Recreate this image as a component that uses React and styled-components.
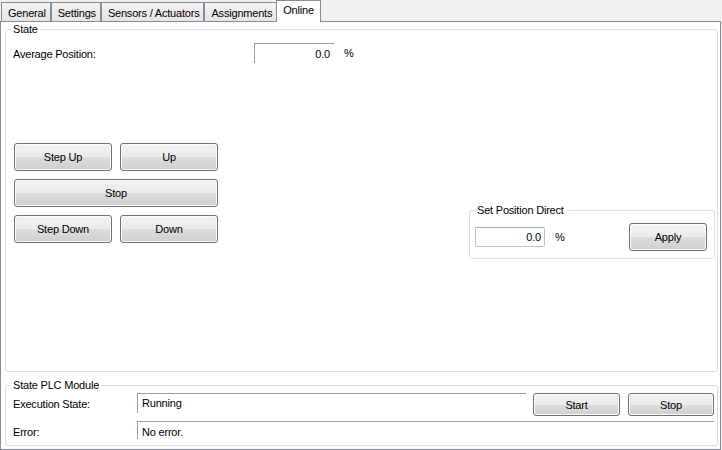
import React from "react";
import styled, { createGlobalStyle } from "styled-components";

const Global = createGlobalStyle`
  html, body { margin: 0; padding: 0; background: #f0f0f0; }
  body {
    font-family: "Liberation Sans", Arial, sans-serif;
    font-size: 11px;
    letter-spacing: -0.2px;
    color: #000;
  }
  * { box-sizing: border-box; }
`;

const Window = styled.div`
  width: 722px;
  height: 450px;
  display: flex;
  flex-direction: column;
  background: #f0f0f0;
`;

const TabStrip = styled.div`
  height: 21px;
  display: flex;
  align-items: flex-end;
  padding-left: 1px;
  flex: none;
`;

const Tab = styled.div`
  height: ${(p) => (p.$active ? "22px" : "19px")};
  margin-bottom: ${(p) => (p.$active ? "-1px" : "0")};
  margin-left: ${(p) => (p.$active ? "-1px" : "0")};
  padding: ${(p) => (p.$active ? "0 6px 3px 6px" : "1px 4px 0 6px")};
  display: flex;
  align-items: center;
  border: 1px solid #898c95;
  border-bottom: none;
  background: ${(p) =>
    p.$active ? "#ffffff" : "linear-gradient(#f3f3f3, #e5e5e5)"};
  position: relative;
  z-index: ${(p) => (p.$active ? 1 : 0)};
  white-space: nowrap;
`;

const Page = styled.div`
  width: 721px;
  flex: 1;
  background: #ffffff;
  border: 1px solid #898c95;
  display: flex;
  flex-direction: column;
  gap: 7px;
  padding: 1px 2px 3px 4px;
`;

const Group = styled.fieldset`
  margin: 0;
  min-width: 0;
  border: 1px solid #d5dfe5;
  border-radius: 3px;
  padding: 0;
  height: ${(p) => p.$h};
  flex: none;
`;

const Legend = styled.legend`
  padding: 0 2px;
  margin-left: 5px;
  line-height: 13px;
`;

const GroupBody = styled.div`
  display: flex;
  flex-direction: column;
  padding: ${(p) => p.$pad};
`;

const Row = styled.div`
  display: flex;
  align-items: ${(p) => p.$align || "center"};
  height: ${(p) => p.$h || "auto"};
  margin-top: ${(p) => p.$mt || "0"};
`;

const Label = styled.div`
  width: ${(p) => p.$w};
  flex: none;
  line-height: ${(p) => p.$lh || "normal"};
  padding-top: ${(p) => p.$pt || "0"};
`;

const SunkenBox = styled.div`
  width: ${(p) => p.$w};
  height: ${(p) => p.$h || "20px"};
  flex: none;
  border-top: 1px solid #a0a0a0;
  border-left: 1px solid #a0a0a0;
  text-align: ${(p) => (p.$right ? "right" : "left")};
  padding: ${(p) => (p.$right ? "0 4px 0 0" : "0 0 0 4px")};
  line-height: ${(p) => p.$lh || "19px"};
  white-space: nowrap;
  overflow: hidden;
`;

const Unit = styled.span`
  margin-left: ${(p) => p.$ml || "10px"};
`;

const Lower = styled.div`
  display: flex;
  align-items: flex-start;
  margin-top: 80px;
`;

const ButtonGrid = styled.div`
  display: grid;
  grid-template-columns: 98px 98px;
  grid-auto-rows: 28px;
  gap: 8px;
  margin-left: 1px;
`;

const Button = styled.button`
  font-family: inherit;
  font-size: 11px;
  letter-spacing: -0.2px;
  color: #000;
  width: ${(p) => p.$w || "auto"};
  height: ${(p) => p.$h || "28px"};
  grid-column: ${(p) => (p.$wide ? "1 / span 2" : "auto")};
  margin-left: ${(p) => p.$ml || "0"};
  flex: none;
  padding: 0;
  border: 1px solid #707070;
  border-radius: 3px;
  background: linear-gradient(
    to bottom,
    #f2f2f2 0%,
    #ebebeb 50%,
    #dddddd 50%,
    #cfcfcf 100%
  );
  box-shadow: inset 0 0 0 1px #fbfbfb;
`;

const SetGroup = styled(Group)`
  width: 246px;
  margin-left: auto;
  margin-right: 2px;
  margin-top: 61px;
`;

const EditBox = styled.div`
  width: 70px;
  height: 20px;
  border: 1px solid #bfc3c8;
  border-top-color: #abadb3;
  border-radius: 2px;
  text-align: right;
  padding-right: 3px;
  line-height: 18px;
`;

export default function App() {
  return (
    <>
      <Global />
      <Window>
        <TabStrip>
          <Tab>General</Tab>
          <Tab>Settings</Tab>
          <Tab>Sensors / Actuators</Tab>
          <Tab>Assignments</Tab>
          <Tab $active>Online</Tab>
        </TabStrip>
        <Page>
          <Group $h="349px">
            <Legend>State</Legend>
            <GroupBody $pad="7px 0 0 7px">
              <Row $h="20px">
                <Label $w="241px" $pt="2px">
                  Average Position:
                </Label>
                <SunkenBox $w="80px" $right $lh="21px">
                  0.0
                </SunkenBox>
                <Unit>%</Unit>
              </Row>
              <Lower>
                <ButtonGrid>
                  <Button>Step Up</Button>
                  <Button>Up</Button>
                  <Button $wide>Stop</Button>
                  <Button>Step Down</Button>
                  <Button>Down</Button>
                </ButtonGrid>
                <SetGroup $h="55px">
                  <Legend>Set Position Direct</Legend>
                  <GroupBody $pad="6px 7px 0 5px">
                    <Row>
                      <EditBox>0.0</EditBox>
                      <Unit>%</Unit>
                      <Button $w="78px" $ml="auto">
                        Apply
                      </Button>
                    </Row>
                  </GroupBody>
                </SetGroup>
              </Lower>
            </GroupBody>
          </Group>
          <Group $h="67px">
            <Legend>State PLC Module</Legend>
            <GroupBody $pad="1px 3px 0 7px">
              <Row $align="flex-start" $h="23px">
                <Label $w="124px" $lh="22px">
                  Execution State:
                </Label>
                <SunkenBox $w="389px">Running</SunkenBox>
                <Button $w="87px" $h="23px" $ml="7px">
                  Start
                </Button>
                <Button $w="86px" $h="23px" $ml="8px">
                  Stop
                </Button>
              </Row>
              <Row $align="flex-start" $h="18px" $mt="5px">
                <Label $w="124px" $lh="22px">
                  Error:
                </Label>
                <SunkenBox $w="577px" $h="18px" $lh="21px">
                  No error.
                </SunkenBox>
              </Row>
            </GroupBody>
          </Group>
        </Page>
      </Window>
    </>
  );
}
